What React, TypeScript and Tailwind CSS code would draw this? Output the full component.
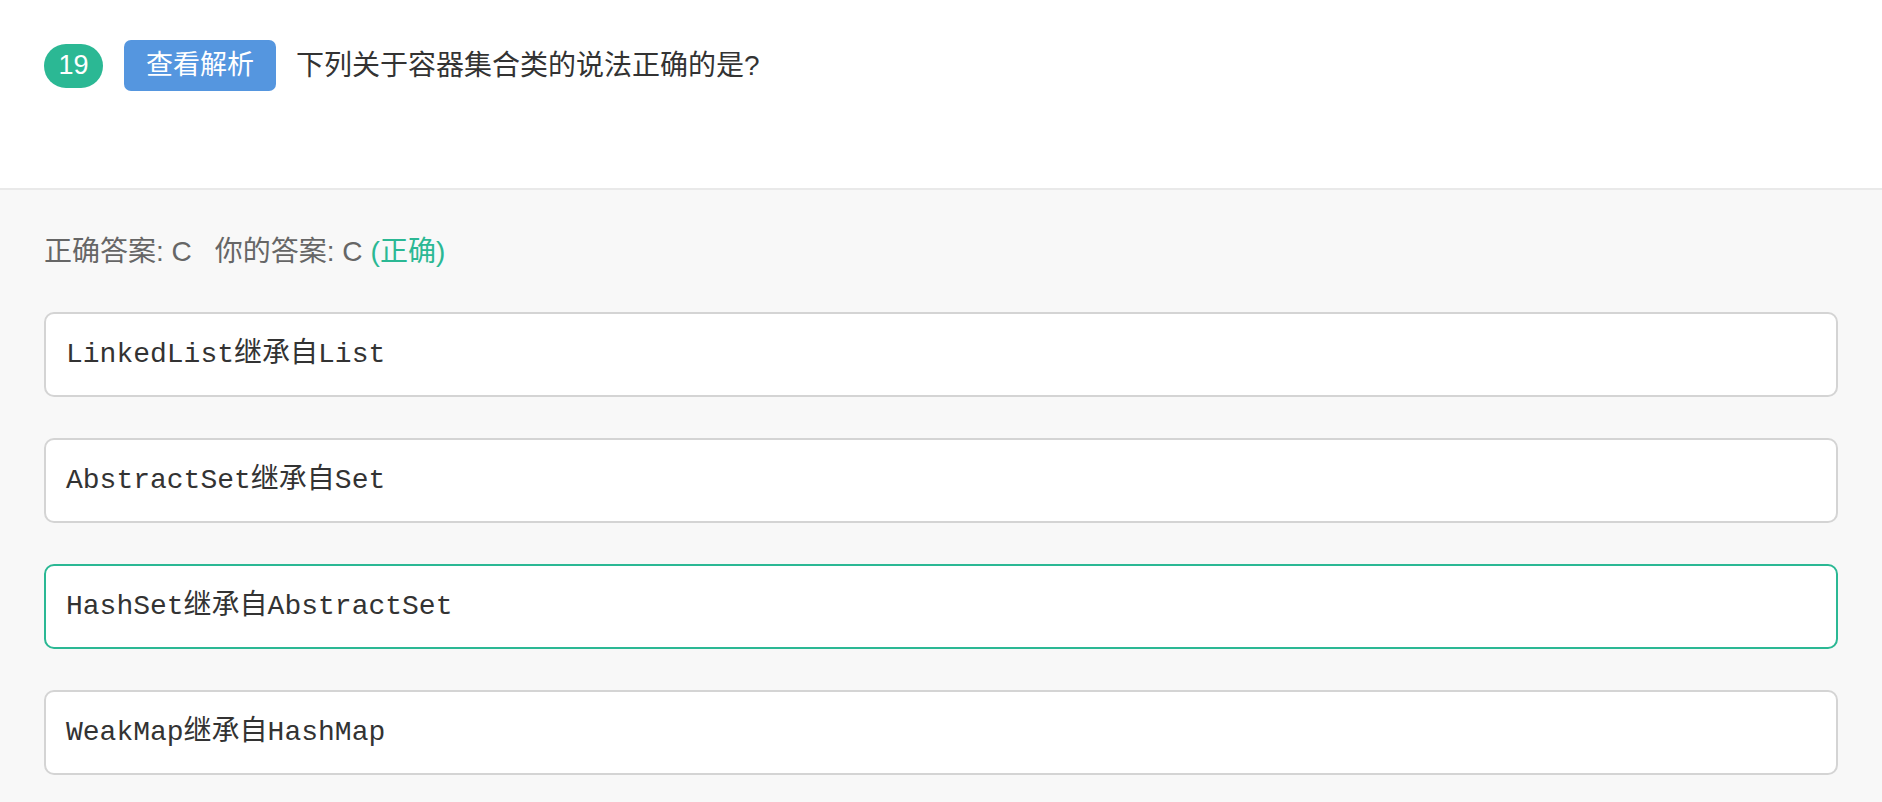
const options = [
  { text: "LinkedList继承自List", correct: false },
  { text: "AbstractSet继承自Set", correct: false },
  { text: "HashSet继承自AbstractSet", correct: true },
  { text: "WeakMap继承自HashMap", correct: false },
];

const sans = "font-['Liberation_Sans','Noto_Sans_CJK_SC',sans-serif]";

export default function App() {
  return (
    <div className={`min-h-screen w-full bg-[#f8f8f8] ${sans}`}>
      <div className="h-[190px] bg-white border-b-2 border-[#e9e9e9] px-[44px] pt-[40px]">
        <div className="flex items-center">
          <span className="flex h-[44px] w-[59px] items-center justify-center rounded-full bg-[#2bb894] text-[27px] leading-none text-white">
            19
          </span>
          <button className="ml-[21px] flex h-[51px] w-[152px] items-center justify-center rounded-[7px] bg-[#5596df] text-[27px] leading-none text-white">
            查看解析
          </button>
          <span className="ml-[20px] text-[28px] leading-none text-[#333]">
            下列关于容器集合类的说法正确的是?
          </span>
        </div>
      </div>

      <div className="px-[44px] pt-[42px]">
        <div className="h-[40px] flex items-center text-[28px] leading-none text-[#666]">
          <span>正确答案: C</span>
          <span className="ml-[23px]">你的答案: C</span>
          <span className="ml-[8px] text-[#2bb894]">(正确)</span>
        </div>

        <div className="mt-[40px] flex flex-col gap-[41px]">
          {options.map((o) => (
            <div
              key={o.text}
              className={`flex h-[85px] items-center rounded-[10px] border-2 bg-white pl-[20px] ${
                o.correct ? "border-[#2bb894]" : "border-[#d4d4d4]"
              }`}
            >
              <span className="font-['Liberation_Mono','Noto_Sans_CJK_SC',monospace] text-[28px] leading-none text-[#333]">
                {o.text}
              </span>
            </div>
          ))}
        </div>
      </div>
    </div>
  );
}
